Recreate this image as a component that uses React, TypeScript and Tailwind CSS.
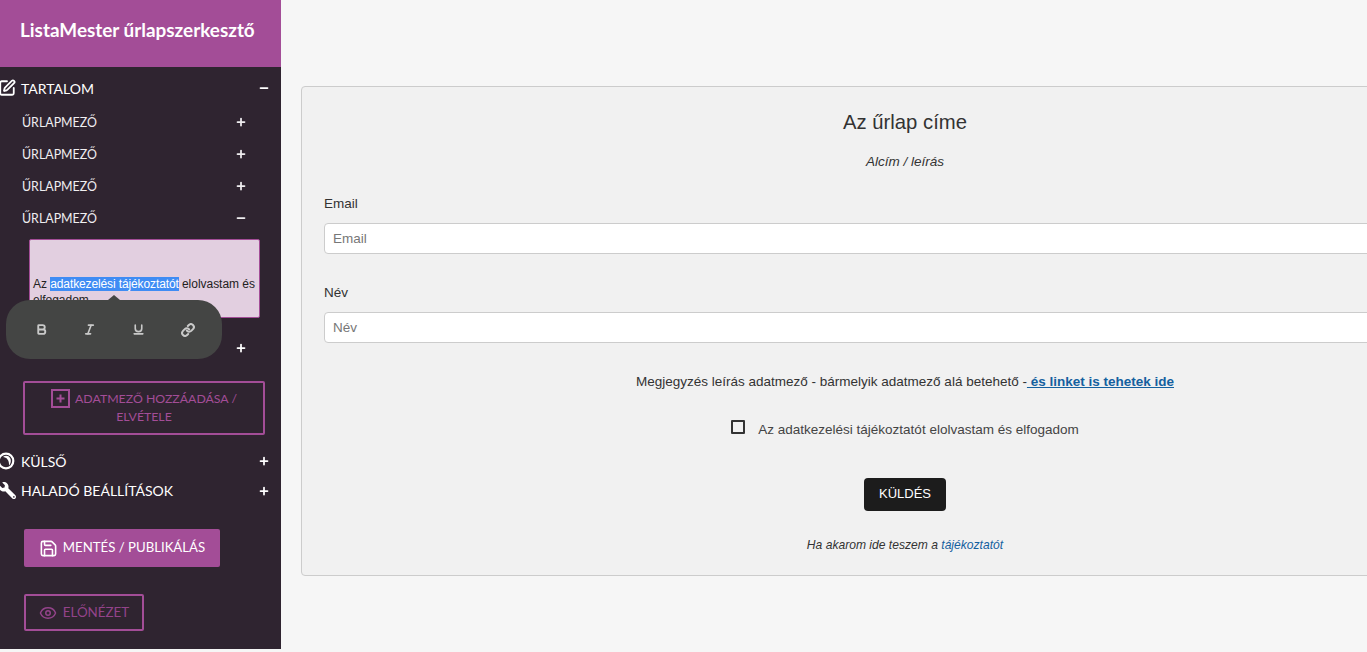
import React from "react";
import { SquarePen, Save, Eye, Bold, Italic, Underline, Link, Plus, Minus } from "lucide-react";
import { FaWrench } from "react-icons/fa";

function Field({ open }: { open?: boolean }) {
  return (
    <div className="flex h-[32px] items-center justify-between pl-[22px] pr-[34px] text-[12.4px] text-[#f0eef0]">
      <span className="pt-[2px]">ŰRLAPMEZŐ</span>
      {open ? <Minus size={12} strokeWidth={3.5} /> : <Plus size={12} strokeWidth={3.5} />}
    </div>
  );
}

function Section({ icon, label, open, className }: { icon: React.ReactNode; label: string; open?: boolean; className: string }) {
  return (
    <div className={`flex items-center pr-[11px] text-[14px] text-white ${className}`}>
      <span className="-ml-[2px] mr-[5px] flex w-[18px] justify-center">{icon}</span>
      <span className="flex-1">{label}</span>
      {open ? <Minus size={12} strokeWidth={3.5} /> : <Plus size={12} strokeWidth={3.5} />}
    </div>
  );
}

function Sidebar() {
  return (
    <aside className="relative h-[649px] w-[281px] shrink-0 bg-[#2f2430] font-['Lato',sans-serif]">
      <header className="flex h-[67px] items-center bg-[#a34d97] pb-[6px] pl-[20px] text-[18.9px] font-bold text-white">
        ListaMester űrlapszerkesztő
      </header>
      <Section className="mt-[6px] h-[30px]" label="TARTALOM" open icon={<SquarePen size={18} strokeWidth={2.4} />} />
      <div className="mt-[3px]">
        <Field />
        <Field />
        <Field />
        <Field open />
      </div>
      <div className="ml-[29px] mt-[5px] h-[79px] w-[231px] overflow-hidden rounded-[2px] border border-[#a34d97] bg-[#e2cfe0] pl-[3px] pt-[36px] font-['Liberation_Sans',sans-serif] text-[12px] leading-[16px] tracking-[-0.03px] text-[#222]">
        Az <span className="bg-[#3f8cf4] tracking-[-0.12px] text-white">adatkezelési tájékoztatót</span> elolvastam és elfogadom
      </div>
      <div className="mt-[14px] flex h-[32px] items-center justify-end pr-[34px] text-white">
        <Plus size={12} strokeWidth={3.5} />
      </div>
      <button className="ml-[23px] mt-[17px] flex h-[54px] w-[242px] flex-col items-center justify-center rounded-[2px] border-2 border-[#a34d97] pb-[2px] text-[12.3px] leading-[17px] text-[#a34d97]">
        <span className="flex items-center">
          <svg width="19" height="19" viewBox="0 0 19 19" className="mr-[5px]" fill="none" stroke="#a34d97">
            <rect x="1" y="1" width="17" height="17" strokeWidth="2" />
            <path d="M9.5 5.5v8M5.5 9.5h8" strokeWidth="2" />
          </svg>
          ADATMEZŐ HOZZÁADÁSA /
        </span>
        <span>ELVÉTELE</span>
      </button>
      <Section
        className="mt-[11px] h-[30px]"
        label="KÜLSŐ"
        icon={
          <svg width="18" height="18" viewBox="0 0 18 18" fill="none" className="-translate-x-[1px]">
            <circle cx="9" cy="9" r="7.3" stroke="white" strokeWidth="2.2" />
            <path d="M6 5C9.5 5 12.5 8.5 12 13.5C14.5 10.5 14.5 6.5 11.5 4.2C9.5 3.2 7.5 3.6 6 5Z" fill="white" />
          </svg>
        }
      />
      <Section className="h-[29px]" label="HALADÓ BEÁLLÍTÁSOK" icon={<FaWrench size={17} className="-scale-x-100" />} />
      <button className="ml-[24px] mt-[24px] flex h-[38px] w-[196px] items-center justify-center rounded-[2px] bg-[#a34d97] text-[13.2px] text-white">
        <Save size={19} strokeWidth={2} className="mr-[5px]" />
        MENTÉS / PUBLIKÁLÁS
      </button>
      <button className="ml-[24px] mt-[27px] flex h-[37px] w-[120px] items-center justify-center rounded-[2px] border-2 border-[#a34d97] text-[13.4px] text-[#93438a]">
        <Eye size={18} strokeWidth={2} className="mr-[6px]" />
        ELŐNÉZET
      </button>

      <div className="absolute left-[6px] top-[300px] flex h-[59px] w-[216px] items-center rounded-[24px] bg-[#444544] pl-[29px] text-[#c9c9c9]">
        <span className="absolute -top-[5px] left-[102px] h-0 w-0 border-x-[6px] border-b-[5px] border-x-transparent border-b-[#444544]" />
        <Bold size={13} strokeWidth={3.5} className="mr-[35px]" />
        <Italic size={13} strokeWidth={3} className="mr-[36px]" />
        <Underline size={13} strokeWidth={3} className="mr-[36px]" />
        <Link size={14} strokeWidth={3.5} />
      </div>
    </aside>
  );
}

function Input({ label, className }: { label: string; className: string }) {
  return (
    <div className={className}>
      <label className="block text-[13.5px] leading-[18px] text-[#333]">{label}</label>
      <input
        readOnly
        placeholder={label}
        className="mt-[10px] block h-[31px] w-full rounded-[4px] border border-[#ccc] bg-white px-[8px] text-[13.5px] text-[#555] placeholder:text-[#777]"
      />
    </div>
  );
}

export default function App() {
  return (
    <div className="flex h-[652px] w-[1367px] overflow-hidden bg-[#f6f6f6] font-['Liberation_Sans',sans-serif]">
      <Sidebar />
      <main className="min-w-0 flex-1 overflow-hidden pl-[20px] pt-[86px]">
        <section className="h-[490px] w-[1208px] rounded-[4px] border border-[#ccc] bg-[#f1f1f1] px-[22px] pt-[22px] text-[#333]">
          <h1 className="text-center text-[20.3px] leading-[26px]">Az űrlap címe</h1>
          <p className="mt-[18px] text-center text-[13.5px] italic leading-[18px]">Alcím / leírás</p>
          <Input label="Email" className="mt-[24px]" />
          <Input label="Név" className="mt-[30px]" />
          <p className="mt-[30px] text-center text-[13.5px] leading-[18px]">
            Megjegyzés leírás adatmező - bármelyik adatmező alá betehető -
            <a className="font-bold text-[#14609f] underline"> és linket is tehetek ide</a>
          </p>
          <div className="mt-[28px] flex items-start justify-center">
            <span className="mt-[1px] h-[14px] w-[14px] rounded-[1px] border-2 border-[#333]" />
            <span className="ml-[13px] mt-[2px] text-[13.5px] leading-[18px] text-[#444]">Az adatkezelési tájékoztatót elolvastam és elfogadom</span>
          </div>
          <div className="mt-[39px] flex justify-center">
            <button className="h-[33px] w-[82px] rounded-[4px] bg-[#1c1c1c] pb-[2px] text-[13px] text-white">KÜLDÉS</button>
          </div>
          <p className="mt-[26px] text-center text-[12.1px] italic leading-[16px]">
            Ha akarom ide teszem a <a className="text-[#14609f]">tájékoztatót</a>
          </p>
        </section>
      </main>
    </div>
  );
}
